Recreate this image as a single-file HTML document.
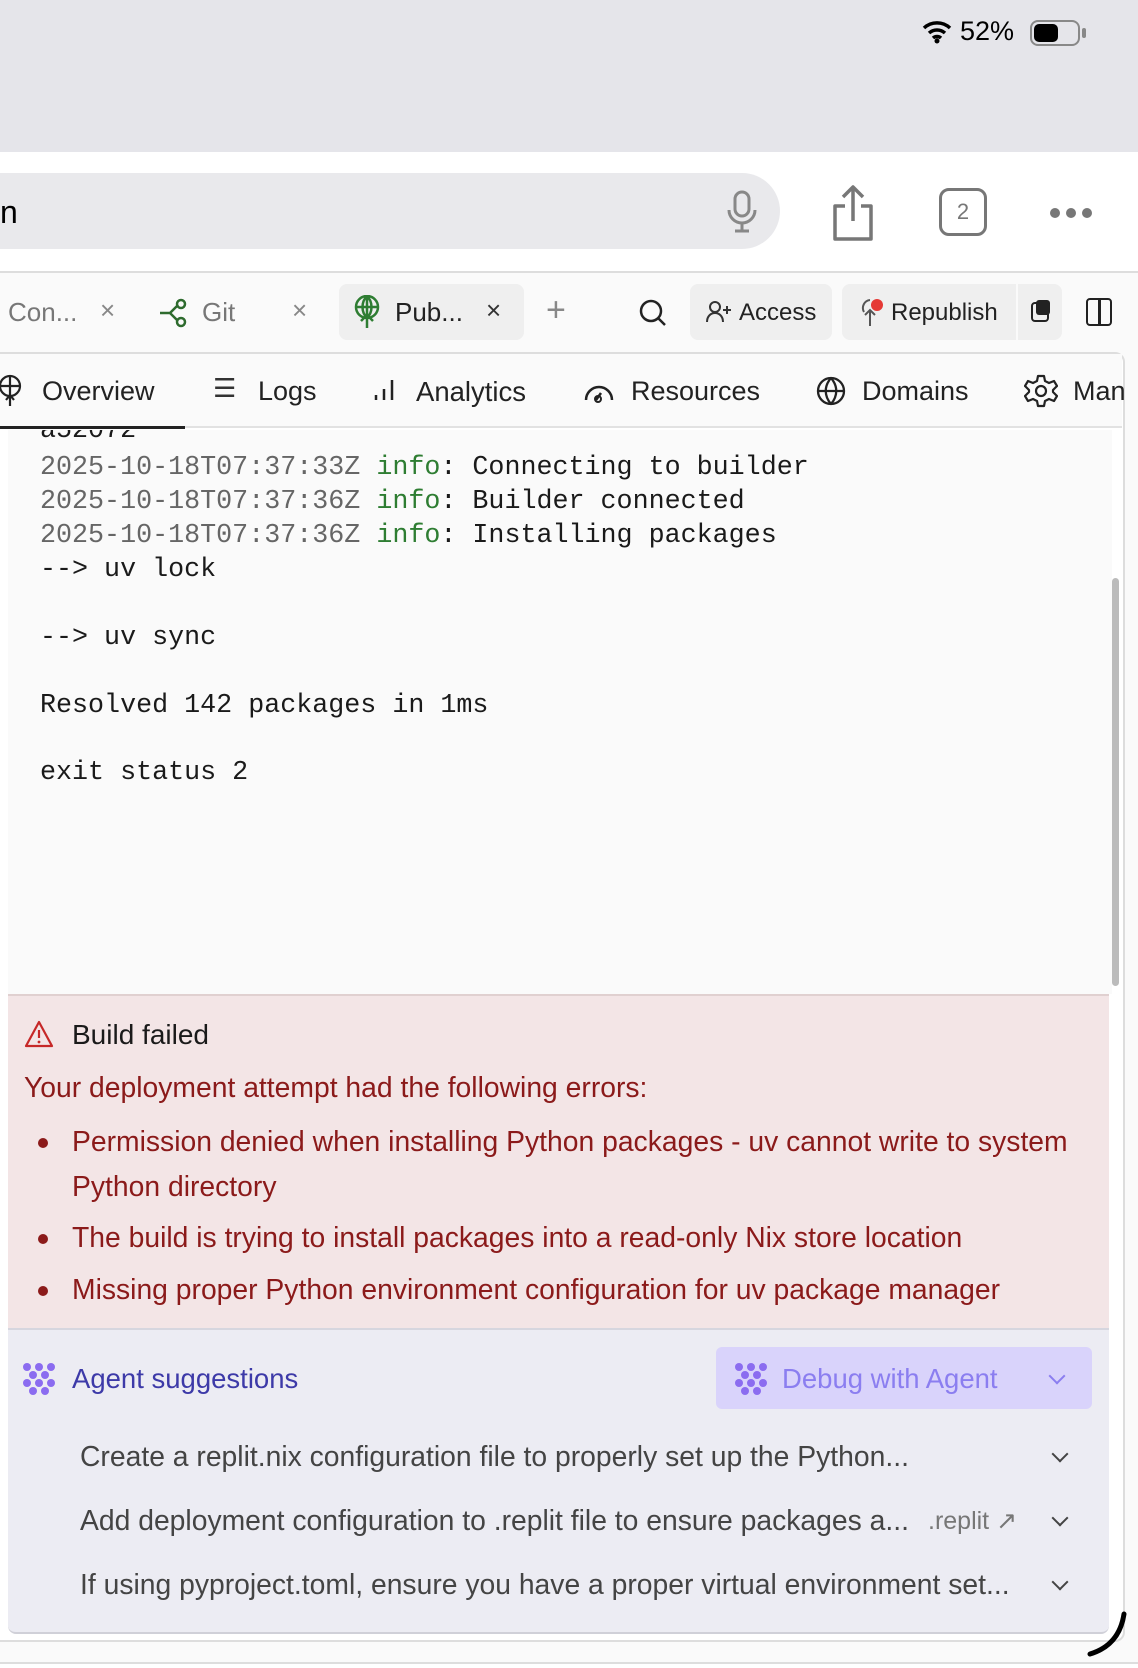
<!DOCTYPE html>
<html><head><meta charset="utf-8"><style>
*{margin:0;padding:0;box-sizing:border-box}
body{width:1138px;height:1668px;position:relative;overflow:hidden;background:#fff;font-family:"Liberation Sans",sans-serif;color:#222}
.a{position:absolute;white-space:nowrap}
.mono{font-family:"Liberation Mono",monospace;font-size:26.7px;color:#1a1a1a}
.ts{color:#666}.inf{color:#2e7d32}
.err{color:#8b1a1a;font-size:28.3px}
.dot{position:absolute;width:10px;height:10px;border-radius:50%;background:#8b1a1a}
.sug{font-size:28.3px;color:#444}
.chev{position:absolute;width:12px;height:12px;border-right:2px solid #444;border-bottom:2px solid #444;transform:rotate(45deg)}
</style></head><body>
<div class="a" style="left:0;top:0;width:1138px;height:152px;background:#e5e5ea"></div>
<div class="a" style="left:960px;top:16px;font-size:27px;color:#000">52%</div>
<svg class="a" style="left:922px;top:20px" width="30" height="24" viewBox="0 0 30 24"><path d="M2 8a19 19 0 0 1 26 0M7 13a12 12 0 0 1 16 0M11 18a6 6 0 0 1 8 0" stroke="#000" stroke-width="3.5" fill="none"/><circle cx="15" cy="21" r="2.5"/></svg>
<div class="a" style="left:1030px;top:20px;width:50px;height:26px;border:2px solid #888;border-radius:8px"></div>
<div class="a" style="left:1034px;top:24px;width:24px;height:18px;background:#000;border-radius:5px"></div>
<div class="a" style="left:1082px;top:28px;width:4px;height:10px;background:#888;border-radius:2px"></div>
<div class="a" style="left:0;top:152px;width:1138px;height:120px;background:#fff"></div>
<div class="a" style="left:-40px;top:173px;width:820px;height:76px;background:#e9e9ec;border-radius:38px"></div>
<div class="a" style="left:0;top:194px;font-size:32px;color:#000">n</div>
<svg class="a" style="left:724px;top:190px" width="36" height="44" viewBox="0 0 36 44"><rect x="11" y="2" width="14" height="24" rx="7" fill="none" stroke="#888" stroke-width="3"/><path d="M5 20a13 13 0 0 0 26 0M18 33v7M11 41h14" stroke="#888" stroke-width="3" fill="none"/></svg>
<svg class="a" style="left:830px;top:184px" width="46" height="58" viewBox="0 0 46 58"><path d="M23 3v34M13 13L23 3l10 10M15 22H5v33h36V22H31" stroke="#777" stroke-width="3.5" fill="none" stroke-linejoin="round"/></svg>
<div class="a" style="left:939px;top:188px;width:48px;height:48px;border:3px solid #777;border-radius:10px;text-align:center;line-height:42px;font-size:22px;color:#777">2</div>
<div class="a" style="left:1050px;top:208px;width:10px;height:10px;border-radius:50%;background:#777;box-shadow:16px 0 #777,32px 0 #777"></div>
<div class="a" style="left:0;top:271px;width:1138px;height:2px;background:#ddd"></div>
<div class="a" style="left:0;top:273px;width:1138px;height:1395px;background:#fafafa"></div>
<div class="a" style="left:8px;top:297px;font-size:26px;color:#777">Con...</div>
<div class="a" style="left:100px;top:295px;font-size:26px;color:#888">×</div>
<svg class="a" style="left:158px;top:298px" width="30" height="30" viewBox="0 0 30 30"><path d="M2 15h10M12 15l8-8M12 15l8 8" stroke="#2e6b2e" stroke-width="2.5" fill="none"/><circle cx="23" cy="6" r="4" fill="none" stroke="#2e6b2e" stroke-width="2.5"/><circle cx="23" cy="24" r="4" fill="none" stroke="#2e6b2e" stroke-width="2.5"/></svg>
<div class="a" style="left:202px;top:297px;font-size:26px;color:#777">Git</div>
<div class="a" style="left:292px;top:295px;font-size:26px;color:#888">×</div>
<div class="a" style="left:339px;top:284px;width:185px;height:56px;background:#efefef;border-radius:8px"></div>
<svg class="a" style="left:353px;top:295px" width="28" height="34" viewBox="0 0 28 34"><circle cx="14" cy="12" r="11" fill="none" stroke="#2e7d32" stroke-width="2.5"/><path d="M3 12h22M14 1v32M14 1c-6 6-6 16 0 22M14 1c6 6 6 16 0 22M8 26l6-6 6 6" stroke="#2e7d32" stroke-width="2.5" fill="none"/></svg>
<div class="a" style="left:395px;top:297px;font-size:26px;color:#222">Pub...</div>
<div class="a" style="left:486px;top:295px;font-size:26px;color:#333">×</div>
<div class="a" style="left:546px;top:291px;font-size:34px;color:#888;font-weight:300">+</div>
<svg class="a" style="left:638px;top:298px" width="30" height="30" viewBox="0 0 30 30"><circle cx="13" cy="13" r="10" fill="none" stroke="#222" stroke-width="2.5"/><path d="M20 20l7 7" stroke="#222" stroke-width="2.5"/></svg>
<div class="a" style="left:690px;top:284px;width:142px;height:56px;background:#efefef;border-radius:8px"></div>
<svg class="a" style="left:706px;top:300px" width="26" height="24" viewBox="0 0 26 24"><circle cx="9" cy="7" r="5" fill="none" stroke="#333" stroke-width="2"/><path d="M1 22c0-6 4-9 8-9s8 3 8 9M21 6v8M17 10h8" stroke="#333" stroke-width="2" fill="none"/></svg>
<div class="a" style="left:739px;top:299px;font-size:24px;color:#222">Access</div>
<div class="a" style="left:842px;top:284px;width:174px;height:56px;background:#efefef;border-radius:8px 0 0 8px"></div>
<div class="a" style="left:1018px;top:284px;width:44px;height:56px;background:#efefef;border-radius:0 8px 8px 0"></div>
<svg class="a" style="left:860px;top:298px" width="24" height="30" viewBox="0 0 24 30"><path d="M10 28V12M5 17l5-5 5 5M10 2a8 8 0 0 0-6 12" stroke="#555" stroke-width="2" fill="none"/><circle cx="17" cy="7" r="6" fill="#e53935"/></svg>
<div class="a" style="left:891px;top:299px;font-size:24px;color:#222">Republish</div>
<div class="a" style="left:1031px;top:302px;width:18px;height:20px;border:2px solid #222;border-radius:4px"></div>
<div class="a" style="left:1036px;top:300px;width:14px;height:15px;background:#222;border-radius:3px"></div>
<div class="a" style="left:1086px;top:298px;width:26px;height:28px;border:2.5px solid #222;border-radius:4px"></div>
<div class="a" style="left:1098px;top:298px;width:2.5px;height:28px;background:#222"></div>
<div class="a" style="left:-10px;top:352px;width:1135px;height:1290px;border:2px solid #ddd;border-radius:10px;background:#fff"></div>
<div class="a" style="left:0;top:354px;width:1122px;height:74px;background:#fafafa;border-bottom:2px solid #e2e2e2"></div>
<div class="a" style="left:0;top:426px;width:185px;height:3px;background:#222"></div>
<svg class="a" style="left:0;top:374px" width="24" height="34" viewBox="0 0 24 34"><circle cx="10" cy="12" r="10" fill="none" stroke="#222" stroke-width="2.2"/><path d="M0 12h20M10 2v30M6 26l4-5 4 5" stroke="#222" stroke-width="2.2" fill="none"/></svg>
<div class="a" style="left:42px;top:376px;font-size:27px">Overview</div>
<div class="a" style="left:213px;top:373px;font-size:26px;color:#333">☰</div>
<div class="a" style="left:258px;top:376px;font-size:27px">Logs</div>
<svg class="a" style="left:374px;top:378px" width="22" height="24" viewBox="0 0 22 24"><path d="M2 22v-5M10 22v-11M18 22V2" stroke="#222" stroke-width="2.5"/></svg>
<div class="a" style="left:416px;top:376px;font-size:27.5px">Analytics</div>
<svg class="a" style="left:583px;top:380px" width="32" height="24" viewBox="0 0 32 24"><path d="M3 20a13 13 0 0 1 26 0M13 20l5-7" stroke="#222" stroke-width="2.5" fill="none"/><circle cx="15" cy="19" r="3" fill="none" stroke="#222" stroke-width="2"/></svg>
<div class="a" style="left:631px;top:376px;font-size:27px">Resources</div>
<svg class="a" style="left:816px;top:376px" width="30" height="30" viewBox="0 0 30 30"><circle cx="15" cy="15" r="13" fill="none" stroke="#222" stroke-width="2.3"/><path d="M2 15h26M15 2c-7 8-7 18 0 26M15 2c7 8 7 18 0 26" stroke="#222" stroke-width="2.3" fill="none"/></svg>
<div class="a" style="left:862px;top:376px;font-size:27px">Domains</div>
<svg class="a" style="left:1024px;top:374px" width="34" height="34" viewBox="0 0 34 34"><circle cx="17" cy="17" r="5" fill="none" stroke="#222" stroke-width="2.2"/><path d="M14 2h6l1 5 4 2 5-2 3 5-4 4v2l4 4-3 5-5-2-4 2-1 5h-6l-1-5-4-2-5 2-3-5 4-4v-2l-4-4 3-5 5 2 4-2z" fill="none" stroke="#222" stroke-width="2.2" stroke-linejoin="round"/></svg>
<div class="a" style="left:1073px;top:376px;font-size:27px">Man</div>
<div class="a" style="left:8px;top:430px;width:1104px;height:564px;background:#fafafa;overflow:hidden">
<div class="a mono" style="left:32px;top:-14px">a52072</div>
<div class="a mono" style="left:32px;top:23px"><span class="ts">2025-10-18T07:37:33Z</span> <span class="inf">info</span>: Connecting to builder</div>
<div class="a mono" style="left:32px;top:57px"><span class="ts">2025-10-18T07:37:36Z</span> <span class="inf">info</span>: Builder connected</div>
<div class="a mono" style="left:32px;top:91px"><span class="ts">2025-10-18T07:37:36Z</span> <span class="inf">info</span>: Installing packages</div>
<div class="a mono" style="left:32px;top:125px">--&gt; uv lock</div>
<div class="a mono" style="left:32px;top:193px">--&gt; uv sync</div>
<div class="a mono" style="left:32px;top:261px">Resolved 142 packages in 1ms</div>
<div class="a mono" style="left:32px;top:328px">exit status 2</div>
</div>
<div class="a" style="left:1112px;top:578px;width:7px;height:408px;background:#bbb;border-radius:4px"></div>
<div class="a" style="left:8px;top:994px;width:1101px;height:334px;background:#f3e5e6;border-top:2px solid #e0d0d0"></div>
<svg class="a" style="left:24px;top:1020px" width="30" height="28" viewBox="0 0 30 28"><path d="M15 2L28 26H2z" fill="none" stroke="#c62828" stroke-width="2.2" stroke-linejoin="round"/><path d="M15 10v8" stroke="#c62828" stroke-width="2.2"/><circle cx="15" cy="22" r="1.4" fill="#c62828"/></svg>
<div class="a" style="left:72px;top:1019px;font-size:28px;color:#1a1a1a">Build failed</div>
<div class="a err" style="left:24px;top:1071px">Your deployment attempt had the following errors:</div>
<div class="dot" style="left:38px;top:1138px"></div>
<div class="a err" style="left:72px;top:1125px">Permission denied when installing Python packages - uv cannot write to system</div>
<div class="a err" style="left:72px;top:1170px">Python directory</div>
<div class="dot" style="left:38px;top:1234px"></div>
<div class="a err" style="left:72px;top:1221px">The build is trying to install packages into a read-only Nix store location</div>
<div class="dot" style="left:38px;top:1286px"></div>
<div class="a err" style="left:72px;top:1273px">Missing proper Python environment configuration for uv package manager</div>
<div class="a" style="left:8px;top:1328px;width:1101px;height:306px;background:#ececf3;border-top:2px solid #d6d6df;border-bottom:2px solid #d0d0d8;border-radius:0 0 8px 8px"></div>
<svg class="a" style="left:22px;top:1362px" width="34" height="34" viewBox="0 0 34 34" fill="#8b6cf0"><circle cx="5" cy="5" r="4"/><circle cx="17" cy="5" r="4"/><circle cx="29" cy="5" r="4"/><circle cx="11" cy="13" r="4"/><circle cx="23" cy="13" r="4"/><circle cx="5" cy="21" r="4"/><circle cx="17" cy="21" r="4"/><circle cx="29" cy="21" r="4"/><circle cx="11" cy="29" r="4"/><circle cx="23" cy="29" r="4"/></svg>
<div class="a" style="left:72px;top:1363px;font-size:27.5px;color:#3d3aa8">Agent suggestions</div>
<div class="a" style="left:716px;top:1347px;width:376px;height:62px;background:#d9d3fb;border-radius:6px"></div>
<svg class="a" style="left:734px;top:1362px" width="34" height="34" viewBox="0 0 34 34" fill="#8b6cf0"><circle cx="5" cy="5" r="4"/><circle cx="17" cy="5" r="4"/><circle cx="29" cy="5" r="4"/><circle cx="11" cy="13" r="4"/><circle cx="23" cy="13" r="4"/><circle cx="5" cy="21" r="4"/><circle cx="17" cy="21" r="4"/><circle cx="29" cy="21" r="4"/><circle cx="11" cy="29" r="4"/><circle cx="23" cy="29" r="4"/></svg>
<div class="a" style="left:782px;top:1363px;font-size:27.5px;color:#8b7ef0">Debug with Agent</div>
<div class="chev" style="left:1051px;top:1370px;border-color:#8b7ef0"></div>
<div class="a sug" style="left:80px;top:1440px">Create a replit.nix configuration file to properly set up the Python...</div>
<div class="chev" style="left:1054px;top:1448px"></div>
<div class="a sug" style="left:80px;top:1504px">Add deployment configuration to .replit file to ensure packages a...</div>
<div class="a sug" style="left:928px;top:1506px;color:#777;font-size:25px">.replit ↗</div>
<div class="chev" style="left:1054px;top:1512px"></div>
<div class="a sug" style="left:80px;top:1568px">If using pyproject.toml, ensure you have a proper virtual environment set...</div>
<div class="chev" style="left:1054px;top:1576px"></div>
<div class="a" style="left:0;top:1662px;width:1138px;height:6px;background:#fff;border-top:2px solid #ddd"></div>
<svg class="a" style="left:1080px;top:1610px" width="50" height="50" viewBox="0 0 50 50"><path d="M44 4c-3 20-14 34-34 40" stroke="#000" stroke-width="5" fill="none" stroke-linecap="round"/></svg>
</body></html>
